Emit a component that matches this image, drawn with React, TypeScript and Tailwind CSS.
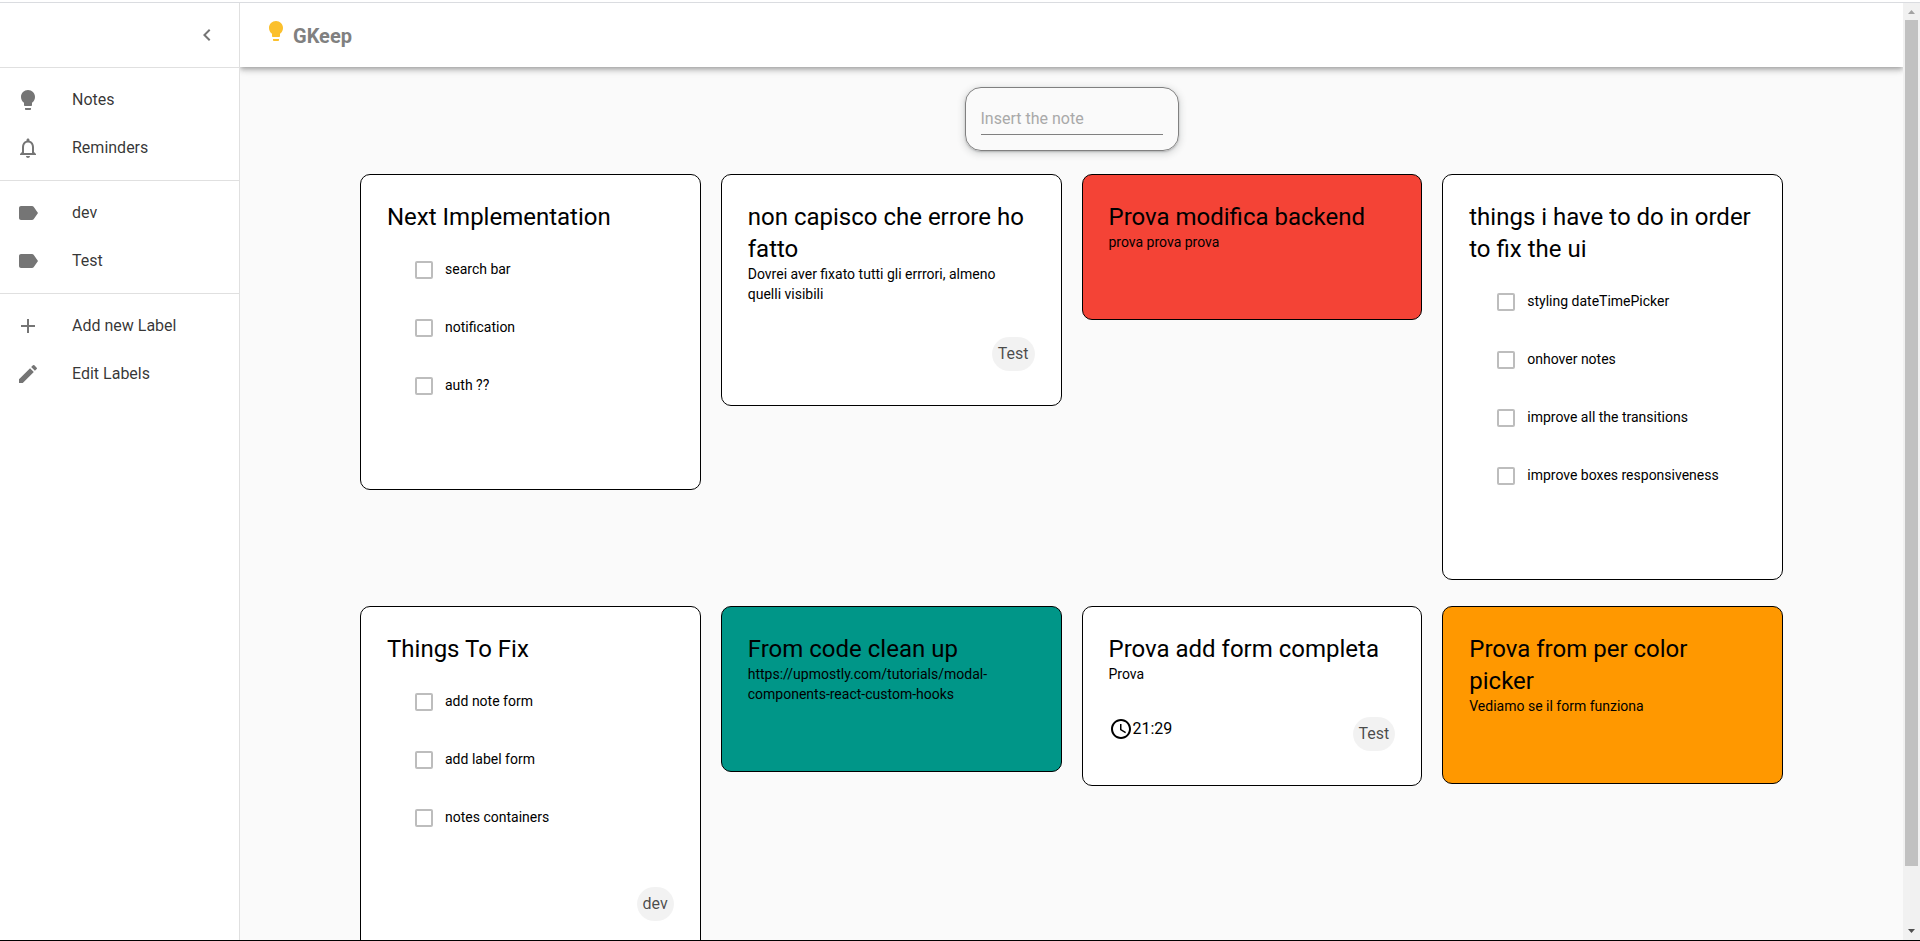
import type { ReactNode } from "react";
import {
  MdAccessTime,
  MdAdd,
  MdChevronLeft,
  MdCreate,
  MdLabel,
  MdNotificationsNone,
} from "react-icons/md";

type Note = {
  title: string;
  text?: string;
  items?: string[];
  time?: string;
  label?: string;
  color: string;
};

const notes: Note[] = [
  {
    title: "Next Implementation",
    items: ["search bar", "notification", "auth ??"],
    color: "bg-white",
  },
  {
    title: "non capisco che errore ho fatto",
    text: "Dovrei aver fixato tutti gli errrori, almeno quelli visibili",
    label: "Test",
    color: "bg-white",
  },
  { title: "Prova modifica backend", text: "prova prova prova", color: "bg-[#f44336]" },
  {
    title: "things i have to do in order to fix the ui",
    items: [
      "styling dateTimePicker",
      "onhover notes",
      "improve all the transitions",
      "improve boxes responsiveness",
    ],
    color: "bg-white",
  },
  {
    title: "Things To Fix",
    items: ["add note form", "add label form", "notes containers"],
    label: "dev",
    color: "bg-white",
  },
  {
    title: "From code clean up",
    text: "https://upmostly.com/tutorials/modal-components-react-custom-hooks",
    color: "bg-[#009688]",
  },
  {
    title: "Prova add form completa",
    text: "Prova",
    time: "21:29",
    label: "Test",
    color: "bg-white",
  },
  {
    title: "Prova from per color picker",
    text: "Vediamo se il form funziona",
    color: "bg-[#ff9800]",
  },
];

function Bulb({ className }: { className: string }) {
  return (
    <svg viewBox="0 0 24 24" fill="currentColor" aria-hidden="true" className={className}>
      <path d="M9 21c0 .55.45 1 1 1h4c.55 0 1-.45 1-1v-1H9v1zm3-19C8.14 2 5 5.14 5 9c0 2.38 1.19 4.47 3 5.74V17c0 .55.45 1 1 1h6c.55 0 1-.45 1-1v-2.26c1.81-1.27 3-3.36 3-5.74 0-3.86-3.14-7-7-7z" />
    </svg>
  );
}

function NavItem({ icon, children }: { icon: ReactNode; children: ReactNode }) {
  return (
    <li>
      <a href="#" className="flex h-12 items-center gap-8 px-4 text-base text-black/80">
        <span className="text-2xl text-[#757575]">{icon}</span>
        {children}
      </a>
    </li>
  );
}

function NavGroup({ children }: { children: ReactNode }) {
  return <ul className="border-t border-[#e0e0e0] py-2">{children}</ul>;
}

function Sidebar() {
  return (
    <nav className="w-60 shrink-0 border-r border-[#e0e0e0] bg-white">
      <div className="flex h-16 items-center justify-end px-2">
        <button type="button" aria-label="Collapse menu" className="pr-3 text-2xl text-[#757575]">
          <MdChevronLeft />
        </button>
      </div>
      <NavGroup>
        <NavItem icon={<Bulb className="size-6" />}>Notes</NavItem>
        <NavItem icon={<MdNotificationsNone />}>Reminders</NavItem>
      </NavGroup>
      <NavGroup>
        <NavItem icon={<MdLabel />}>dev</NavItem>
        <NavItem icon={<MdLabel />}>Test</NavItem>
      </NavGroup>
      <NavGroup>
        <NavItem icon={<MdAdd />}>Add new Label</NavItem>
        <NavItem icon={<MdCreate />}>Edit Labels</NavItem>
      </NavGroup>
    </nav>
  );
}

function NoteCard({ note }: { note: Note }) {
  const hasFooter = note.time || note.label;
  return (
    <article className={`rounded-[10px] border border-black p-[26px] ${note.color}`}>
      <h2 className="text-2xl/8">{note.title}</h2>
      {note.text && <p className="-mt-px mb-px pr-2 text-sm/5">{note.text}</p>}
      {note.items && (
        <ul className="py-2 pl-7">
          {note.items.map((item) => (
            <li key={item}>
              <label className="flex h-[58px] items-center gap-3 text-sm/5">
                <input
                  type="checkbox"
                  className="size-[18px] appearance-none rounded-xs border-2 border-[#bdbdbd] checked:bg-[#757575]"
                />
                <span className="pb-0.5">{item}</span>
              </label>
            </li>
          ))}
        </ul>
      )}
      {hasFooter ? (
        <footer className="flex items-start pt-8 pb-2">
          {note.time && (
            <span className="flex items-center text-base">
              <MdAccessTime className="text-2xl" />
              {note.time}
            </span>
          )}
          {note.label && (
            <span className="ml-auto rounded-full bg-black/5 px-1.5 py-[5px] text-base text-black/70">
              {note.label}
            </span>
          )}
        </footer>
      ) : (
        <div className="h-10" />
      )}
    </article>
  );
}

function Scrollbar() {
  return (
    <div aria-hidden="true" className="flex w-[17px] shrink-0 flex-col items-center bg-[#f1f1f1]">
      <svg viewBox="0 0 17 17" className="size-[17px] shrink-0" fill="#a3a3a3">
        <path d="M5 11h7L8.500 7z" />
      </svg>
      <div className="w-[13px] grow-[846] basis-0 bg-[#c1c1c1]" />
      <div className="grow-[57] basis-0" />
      <svg viewBox="0 0 17 17" className="size-[17px] shrink-0" fill="#505050">
        <path d="M5 6h7L8.500 10z" />
      </svg>
    </div>
  );
}

export default function App() {
  return (
    <div className="flex h-screen flex-col overflow-hidden border-b border-black bg-white pt-0.5 font-[Roboto,sans-serif] text-black">
      <div className="flex min-h-0 flex-1 border-t border-[#dadce0]">
        <Sidebar />
        <div className="flex min-w-0 flex-1 flex-col overflow-hidden bg-[#fafafa]">
          <header className="flex h-16 shrink-0 items-center gap-[5px] bg-white px-6 shadow-[0_2px_4px_-1px_rgba(0,0,0,0.2),0_4px_5px_0_rgba(0,0,0,0.14),0_1px_10px_0_rgba(0,0,0,0.12)]">
            <Bulb className="mb-2 size-6 text-[#fbc02d]" />
            <h1 className="pt-0.5 text-xl font-bold text-[#808080]">GKeep</h1>
          </header>
          <main className="px-[120px] pt-5">
            <form className="mx-auto mb-[23px] h-16 w-[214px] rounded-2xl border border-[#808080] px-[15px] pt-[15px] shadow-[0_1px_2px_0_rgba(60,64,67,0.3),0_2px_6px_2px_rgba(60,64,67,0.15)]">
              <input
                type="text"
                aria-label="Insert the note"
                placeholder="Insert the note"
                className="h-8 w-full border-b border-[#808080] bg-transparent text-base outline-none placeholder:text-[#a9a9a9]"
              />
            </form>
            <div className="grid grid-cols-4 items-start gap-x-5 gap-y-[26px]">
              {notes.map((note) => (
                <NoteCard key={note.title} note={note} />
              ))}
            </div>
          </main>
        </div>
        <Scrollbar />
      </div>
    </div>
  );
}
